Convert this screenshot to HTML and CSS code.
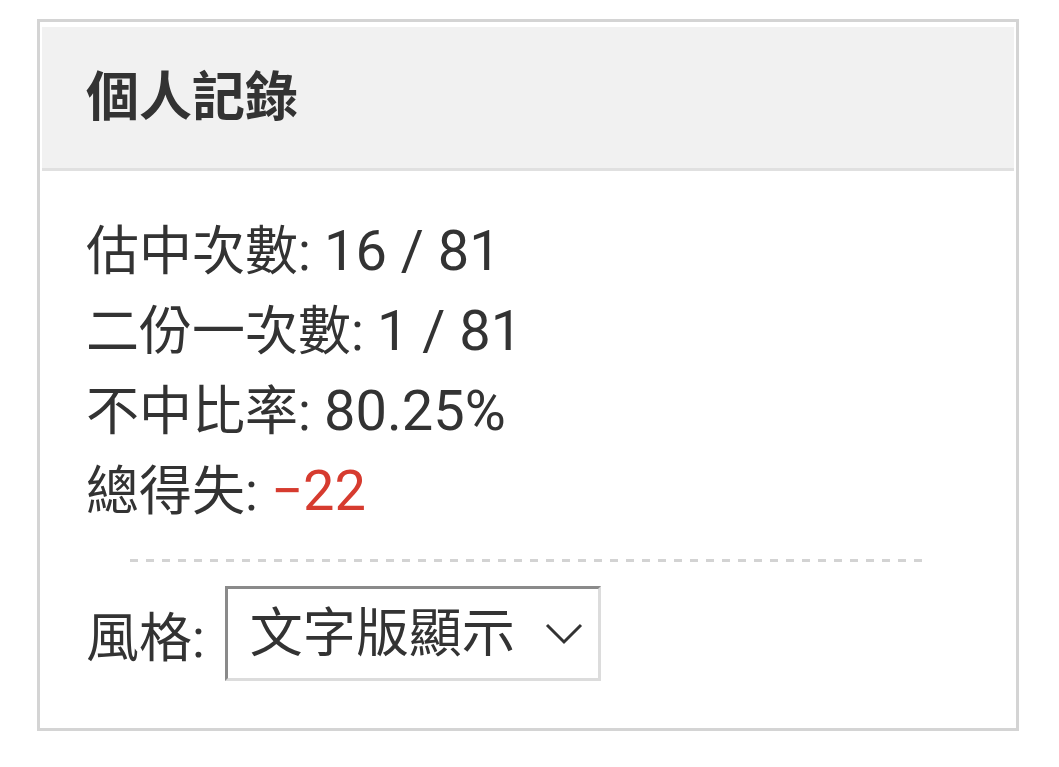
FILE: index.html
```html
<!DOCTYPE html>
<html lang="zh-Hant">
<head>
    <meta charset="UTF-8">
    <meta name="viewport" content="width=device-width, initial-scale=1.0">
    <title>個人記錄</title>
    <link rel="stylesheet" href="styles.css">
</head>
<body>
    <div class="card">
        <div class="card-header">個人記錄</div>
        <div class="card-body">
            <div class="stat">估中次數: <span class="num">16 / 81</span></div>
            <div class="stat">二份一次數: <span class="num">1 / 81</span></div>
            <div class="stat">不中比率: <span class="num">80.25%</span></div>
            <div class="stat">總得失: <span class="num loss">−22</span></div>

            <div class="divider"></div>

            <div class="style-row">
                <label for="styleSelect">風格:</label>
                <div class="select-wrap">
                    <select id="styleSelect" class="style-select">
                        <option>文字版顯示</option>
                        <option>圖表顯示</option>
                    </select>
                    <svg class="chevron" width="38" height="22" viewBox="0 0 38 22">
                        <path d="M2 2 L19 19 L36 2" fill="none" stroke="#333" stroke-width="3"/>
                    </svg>
                </div>
            </div>
        </div>
    </div>
</body>
</html>
```

FILE: styles.css
```css
body {
    margin: 0;
    padding: 19px 0 0 37px;
    font-family: Roboto, "Noto Sans CJK TC", sans-serif;
    color: #333;
    background: #fff;
}
.card {
    width: 976px;
    border: 3px solid #d4d4d4;
    padding: 5px 0 0 0;
}
.card-header {
    margin: 0 2px;
    height: 131px;
    padding: 0 0 10px 44px;
    display: flex;
    align-items: center;
    background: #f1f1f1;
    border-bottom: 3px solid #e0e0e0;
    font-size: 53px;
    font-weight: bold;
}
.card-body {
    padding: 41px 46px 47px 46px;
    font-size: 53px;
}
.stat {
    height: 80px;
    line-height: 80px;
}
.num {
    font-size: 56px;
    line-height: 1;
}
.loss {
    color: #d63b2f;
}
.divider {
    width: 90%;
    height: 3px;
    margin: 27px auto 24px auto;
    background: repeating-linear-gradient(to right, #d3d3d3 0 8px, transparent 8px 16px);
}
.style-row {
    display: flex;
    align-items: center;
    gap: 20px;
}
.select-wrap {
    position: relative;
}
.style-select {
    appearance: none;
    -webkit-appearance: none;
    width: 376px;
    height: 95px;
    margin: 0;
    padding: 0 0 0 22px;
    font-family: Roboto, "Noto Sans CJK TC", sans-serif;
    font-size: 53px;
    color: #333;
    background: #fff;
    border: 3px solid;
    border-color: #8a8a8a #dcdcdc #dcdcdc #8a8a8a;
    border-radius: 0;
    box-sizing: border-box;
}
.chevron {
    position: absolute;
    left: 320px;
    top: 37px;
    pointer-events: none;
}
```
